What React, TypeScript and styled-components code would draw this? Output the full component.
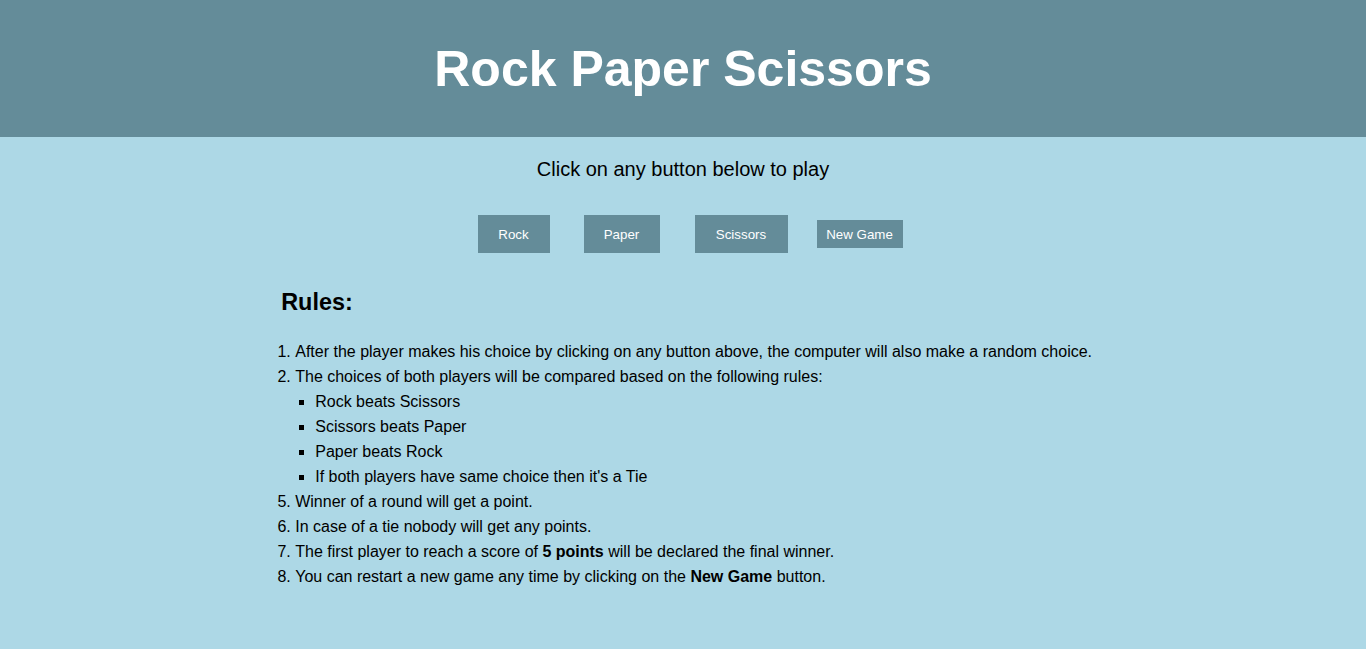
import React from "react";
import styled, { createGlobalStyle } from "styled-components";

const Global = createGlobalStyle`
  html, body { margin: 0; padding: 0; }
  body {
    background: #add8e6;
    font-family: "Liberation Sans", Arial, sans-serif;
    color: #000;
  }
`;

const Header = styled.header`
  height: 137px;
  background: #648c99;
  display: flex;
  align-items: center;
  justify-content: center;
`;

const Title = styled.h1`
  margin: 0;
  padding-top: 2px;
  font-size: 50px;
  font-weight: 700;
  line-height: 57px;
  color: #fff;
`;

const Main = styled.main`
  display: flex;
  flex-direction: column;
  align-items: center;
`;

const Subtitle = styled.p`
  margin: 21px 0 0;
  font-size: 20px;
  line-height: 23px;
`;

const ButtonRow = styled.div`
  margin-top: 34px;
  height: 38px;
  display: flex;
  align-items: center;
  padding-left: 14px;
`;

const GameButton = styled.button<{ $small?: boolean; $gap?: number; $width: number }>`
  margin-left: ${(p) => p.$gap ?? 0}px;
  width: ${(p) => p.$width}px;
  height: ${(p) => (p.$small ? 28 : 38)}px;
  padding: 0;
  border: none;
  background: #648c99;
  color: #fff;
  font-family: "Liberation Sans", Arial, sans-serif;
  font-size: 13.33px;
  white-space: nowrap;
  cursor: pointer;
`;

const Rules = styled.section`
  width: 60%;
  margin-top: 36px;
`;

const RulesTitle = styled.h3`
  margin: 0 0 0 8px;
  font-size: 23.4px;
  line-height: 27px;
  font-weight: 700;
`;

const OrderedList = styled.ol`
  margin: 23px 0 0;
  padding-left: 22px;
  font-size: 16px;
  line-height: 25px;
`;

const SubList = styled.ul`
  margin: 0;
  padding-left: 20px;
  list-style-type: square;
`;

export default function App() {
  return (
    <>
      <Global />
      <Header>
        <Title>Rock Paper Scissors</Title>
      </Header>
      <Main>
        <Subtitle>Click on any button below to play</Subtitle>
        <ButtonRow>
          <GameButton $width={72}>Rock</GameButton>
          <GameButton $gap={34} $width={76}>Paper</GameButton>
          <GameButton $gap={35} $width={93}>Scissors</GameButton>
          <GameButton $small $gap={29} $width={86}>New Game</GameButton>
        </ButtonRow>
        <Rules>
          <RulesTitle>Rules:</RulesTitle>
          <OrderedList>
            <li>After the player makes his choice by clicking on any button above, the computer will also make a random choice.</li>
            <li>
              The choices of both players will be compared based on the following rules:
              <SubList>
                <li>Rock beats Scissors</li>
                <li>Scissors beats Paper</li>
                <li>Paper beats Rock</li>
                <li>If both players have same choice then it's a Tie</li>
              </SubList>
            </li>
            <li value={5}>Winner of a round will get a point.</li>
            <li>In case of a tie nobody will get any points.</li>
            <li>The first player to reach a score of <b>5 points</b> will be declared the final winner.</li>
            <li>You can restart a new game any time by clicking on the <b>New Game</b> button.</li>
          </OrderedList>
        </Rules>
      </Main>
    </>
  );
}
